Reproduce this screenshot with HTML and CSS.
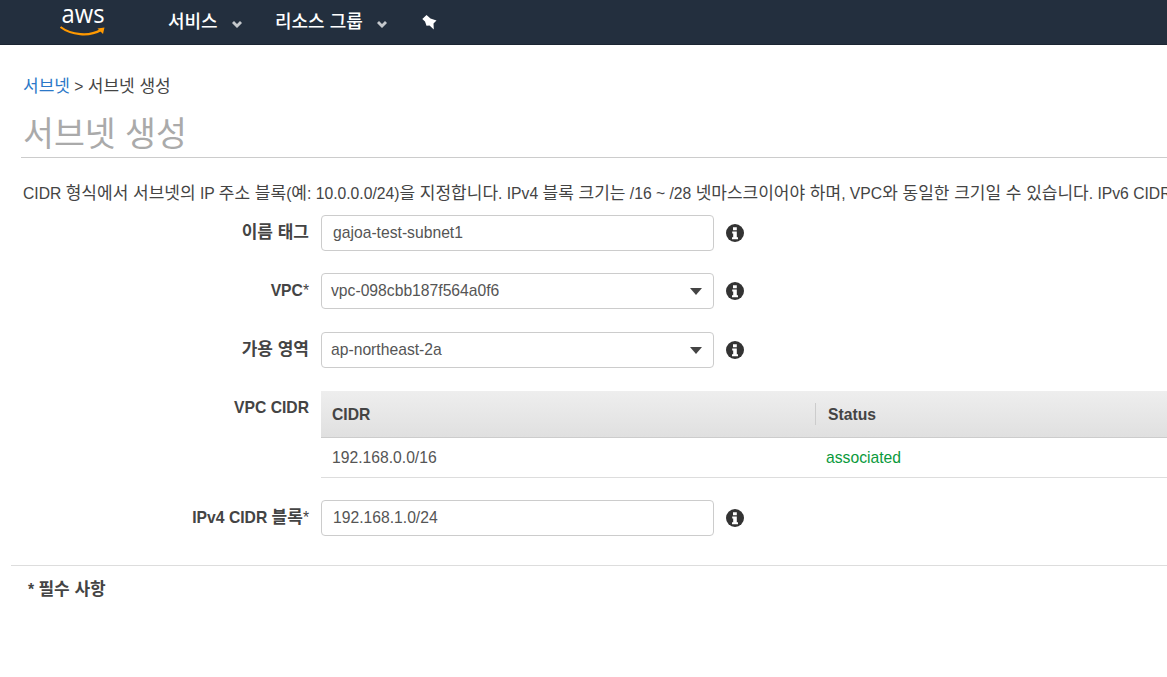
FILE: index.html
```html
<!DOCTYPE html>
<html lang="ko">
<head>
<meta charset="utf-8">
<title>서브넷 생성</title>
<link rel="stylesheet" href="styles.css">
</head>
<body>
<header class="topbar">
  <svg class="logo" viewBox="0 0 48 34" width="48" height="34" aria-label="aws">
    <text x="24" y="18" class="logo-text" text-anchor="middle" textLength="43" lengthAdjust="spacingAndGlyphs">aws</text>
    <path d="M1.500 22 C12 30 30 32 42 25" fill="none" stroke="#f90" stroke-width="2.200"/>
    <path d="M38.500 23.500 L45.500 22.500 L44 29 Z" fill="#f90"/>
  </svg>
  <nav class="nav">
    <span class="nav-item nav-services">서비스<svg class="chev" viewBox="0 0 10 7" width="10" height="7"><path d="M0 2 L2 0 L5 3 L8 0 L10 2 L5 7 Z" fill="#c4c8cc"/></svg></span>
    <span class="nav-item nav-groups">리소스 그룹<svg class="chev" viewBox="0 0 10 7" width="10" height="7"><path d="M0 2 L2 0 L5 3 L8 0 L10 2 L5 7 Z" fill="#c4c8cc"/></svg></span>
    <svg class="pin" viewBox="0 0 15 15" width="15" height="15"><path d="M4.500 0 L8.500 3.500 L14.500 5.500 L11.500 8.500 L11.800 14.500 L7.500 10.500 L4.500 10.800 L3 6.500 L0.300 4 Z" fill="#fff"/></svg>
  </nav>
</header>
<main class="page">
  <div class="crumbs"><a class="crumb-link ko">서브넷</a> &gt; <span class="ko">서브넷 생성</span></div>
  <h1 class="title">서브넷 생성</h1>
  <p class="desc">CIDR <span class="ko">형식에서 서브넷의</span> IP <span class="ko">주소 블록</span>(<span class="ko">예</span>: 10.0.0.0/24)<span class="ko">을 지정합니다</span>. IPv4 <span class="ko">블록 크기는</span> /16 ~ /28 <span class="ko">넷마스크이어야 하며</span>, VPC<span class="ko">와 동일한 크기일 수 있습니다</span>. IPv6 CIDR</p>
  <form class="form">
    <div class="row row-name">
      <label class="label"><span class="ko">이름 태그</span></label>
      <div class="field"><span class="control input-text">gajoa-test-subnet1</span></div>
      <svg class="info" viewBox="0 0 18 18" width="18" height="18"><circle cx="9" cy="9" r="9" fill="#333"/><path d="M7 3.200 h3.800 v3 h-3.800 Z M6.200 7.500 h4.600 v5.700 h1.200 v2 h-6 v-2 h1.200 v-3.700 h-1 Z" fill="#fff"/></svg>
    </div>
    <div class="row row-vpc">
      <label class="label">VPC<span class="star">*</span></label>
      <div class="field"><span class="control select">vpc-098cbb187f564a0f6<i class="caret"></i></span></div>
      <svg class="info" viewBox="0 0 18 18" width="18" height="18"><circle cx="9" cy="9" r="9" fill="#333"/><path d="M7 3.200 h3.800 v3 h-3.800 Z M6.200 7.500 h4.600 v5.700 h1.200 v2 h-6 v-2 h1.200 v-3.700 h-1 Z" fill="#fff"/></svg>
    </div>
    <div class="row row-az">
      <label class="label"><span class="ko">가용 영역</span></label>
      <div class="field"><span class="control select">ap-northeast-2a<i class="caret"></i></span></div>
      <svg class="info" viewBox="0 0 18 18" width="18" height="18"><circle cx="9" cy="9" r="9" fill="#333"/><path d="M7 3.200 h3.800 v3 h-3.800 Z M6.200 7.500 h4.600 v5.700 h1.200 v2 h-6 v-2 h1.200 v-3.700 h-1 Z" fill="#fff"/></svg>
    </div>
    <div class="row row-table">
      <label class="label label-top">VPC CIDR</label>
      <div class="cidr">
        <div class="cidr-head">
          <div class="cell-a">CIDR</div>
          <div class="cell-b">Status</div>
        </div>
        <div class="cidr-row">
          <div class="cell-a">192.168.0.0/16</div>
          <div class="cell-b status-ok">associated</div>
        </div>
      </div>
    </div>
    <div class="row row-ipv4">
      <label class="label">IPv4 CIDR <span class="ko">블록</span><span class="star">*</span></label>
      <div class="field"><span class="control input-text">192.168.1.0/24</span></div>
      <svg class="info" viewBox="0 0 18 18" width="18" height="18"><circle cx="9" cy="9" r="9" fill="#333"/><path d="M7 3.200 h3.800 v3 h-3.800 Z M6.200 7.500 h4.600 v5.700 h1.200 v2 h-6 v-2 h1.200 v-3.700 h-1 Z" fill="#fff"/></svg>
    </div>
  </form>
  <div class="footer-note">* <span class="ko">필수 사항</span></div>
</main>
</body>
</html>
```
FILE: styles.css
```css
* { box-sizing: border-box; }
html, body { margin: 0; height: 100%; overflow: hidden; background: #fff; }
body {
  font-family: "Liberation Sans", "Noto Sans CJK KR", sans-serif;
  font-size: 15.700px;
  color: #444;
}
.ko { font-size: 17px; }
.topbar {
  height: 45px;
  background: #232f3e;
  border-bottom: 1px solid #1b2532;
  display: flex;
  align-items: center;
  padding-left: 59px;
}
.logo { display: block; overflow: visible; }
.logo-text { font: 400 26px "Open Sans", "Liberation Sans", sans-serif; fill: #fff; }
.nav { display: flex; align-items: center; margin-left: 61px; color: #fff; font-size: 18px; font-weight: 500; }
.nav-item { display: flex; align-items: center; white-space: nowrap; line-height: 24px; }
.chev { margin-left: 14px; margin-top: 4px; }
.nav-services { width: 107px; }
.nav-groups { width: 147px; }
.pin { margin: 1px 0 0 0; }
.page { padding: 0; }
.crumbs { margin: 33px 0 0 23px; height: 18px; line-height: 18px; color: #444; }
.crumb-link { color: #2b78c8; }
.title {
  margin: 14px 0 0 21px;
  padding: 4px 0 1px 2px;
  height: 48px;
  font-size: 33.600px;
  line-height: 42px;
  font-weight: 400;
  color: #aaa;
  border-bottom: 1px solid #ccc;
  white-space: nowrap;
}
.desc { margin: 26px 0 0 23px; height: 20px; line-height: 20px; white-space: nowrap; color: #444; }
.form { margin: 11px 0 0; }
.row { display: flex; align-items: center; }
.row-vpc, .row-ipv4 { margin-top: 22px; }
.row-az { margin-top: 23px; }
.row-table { margin-top: 23px; align-items: flex-start; }
.label {
  width: 309px;
  text-align: right;
  font-weight: 700;
  line-height: 20px;
  color: #444;
  white-space: nowrap;
}
.label-top { padding-top: 7px; }
.star { font-weight: 400; }
.field { width: 393px; margin-left: 12px; }
.control {
  display: flex;
  align-items: center;
  position: relative;
  height: 36px;
  border: 1px solid #ccc;
  border-radius: 4px;
  background: #fff;
  color: #555;
}
.input-text { padding-left: 11px; }
.select { padding-left: 9px; }
.caret {
  position: absolute;
  right: 11px;
  top: 14px;
  border-left: 6.500px solid transparent;
  border-right: 6.500px solid transparent;
  border-top: 7px solid #444;
}
.info { margin-left: 11.500px; flex: none; }
.cidr { margin-left: 12px; width: 846px; flex: none; }
.cidr-head {
  display: flex;
  align-items: center;
  height: 47px;
  background: linear-gradient(#eee, #e0e0e0);
  border-bottom: 1px solid #ccc;
  font-weight: 700;
  color: #444;
}
.cidr-row {
  display: flex;
  align-items: center;
  height: 40px;
  border-bottom: 1px solid #ddd;
  color: #555;
}
.cell-a { width: 494px; padding-left: 11px; flex: none; }
.cell-b { flex: 1; padding-left: 12px; }
.cidr-head .cell-a { padding-top: 2px; }
.cidr-head .cell-b { border-left: 1px solid #ccc; height: 22px; line-height: 24px; }
.cidr-row .cell-b { padding-left: 11px; }
.status-ok { color: #0a9a3c; }
.footer-note {
  margin: 29px 0 0 11px;
  padding: 15px 0 0 17px;
  border-top: 1px solid #ddd;
  font-weight: 700;
  line-height: 18px;
  color: #444;
}
```
